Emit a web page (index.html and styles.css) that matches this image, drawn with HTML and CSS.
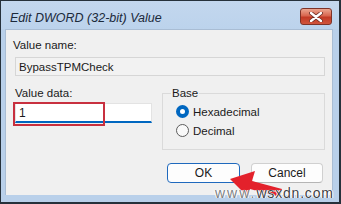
FILE: index.html
```html
<!DOCTYPE html>
<html lang="en">
<head>
    <meta charset="UTF-8">
    <title>Edit DWORD (32-bit) Value</title>
    <link rel="stylesheet" href="styles.css">
</head>
<body>
    <div class="window">
        <div class="titlebar">
            <span class="title">Edit DWORD (32-bit) Value</span>
            <div class="close">
                <svg width="14" height="10" viewBox="0 0 14 10">
                    <path d="M2 1 L12 9 M12 1 L2 9" stroke="#6b2b22" stroke-width="4" stroke-linecap="round"/>
                    <path d="M2 1 L12 9 M12 1 L2 9" stroke="#ffffff" stroke-width="2.4" stroke-linecap="round"/>
                </svg>
            </div>
        </div>

        <div class="client">
            <div class="lbl lbl-name">Value name:</div>
            <div class="field field-ro">BypassTPMCheck</div>

            <div class="data-row">
                <div class="data-col">
                    <div class="lbl">Value data:</div>
                    <div class="field field-edit">1</div>
                </div>
                <fieldset class="base">
                    <legend>Base</legend>
                    <div class="radio-row"><span class="radio checked"></span>Hexadecimal</div>
                    <div class="radio-row"><span class="radio"></span>Decimal</div>
                </fieldset>
            </div>

            <div class="buttons">
                <div class="btn btn-default">OK</div>
                <div class="btn">Cancel</div>
            </div>
        </div>

        <!-- annotations drawn over the dialog -->
        <div class="highlight"></div>
        <svg class="arrow" width="341" height="204" viewBox="0 0 341 204">
            <polygon points="230,179 255,171 252,181 282,189 280,197 250,189 248,197" fill="#e3212b"/>
        </svg>
        <div class="watermark"><span class="wm-light">www.</span>wsxdn.com</div>
    </div>
</body>
</html>
```

FILE: styles.css
```css
body {
    margin: 0;
    font-family: "Liberation Sans", Arial, sans-serif;
    font-size: 11.5px;
    color: #1a1a1a;
}
.window {
    position: relative;
    width: 341px;
    height: 204px;
    box-sizing: border-box;
    border-style: solid;
    border-color: #26313b;
    border-width: 1px 2px 2px 1px;
    background: #b9d0ea;
    padding: 0 6px 7px 4px;
    display: flex;
    flex-direction: column;
    overflow: hidden;
}
.titlebar {
    height: 28px;
    margin: 0 -6px 0 -4px;
    padding: 0 7px 0 9px;
    background: linear-gradient(#c3d7ee, #bcd3ec);
    display: flex;
    align-items: flex-start;
}
.title {
    font-style: italic;
    font-size: 12.5px;
    color: #1b2a3b;
    padding-top: 10px;
    line-height: 14px;
}
.close {
    margin-left: auto;
    margin-top: 7px;
    width: 32px;
    height: 17px;
    box-sizing: border-box;
    border: 1px solid #7e3328;
    border-radius: 3px;
    background: linear-gradient(#eba690 0%, #d8664f 45%, #c23a25 55%, #d0553d 100%);
    display: flex;
    align-items: center;
    justify-content: center;
}
.client {
    flex: 1;
    background: #f0f0f0;
    border: 1px solid #a9bdd4;
    border-bottom: none;
}
.lbl {
    line-height: 14px;
}
.lbl-name {
    margin: 8px 0 0 7px;
}
.field {
    box-sizing: border-box;
    padding-left: 3px;
    display: flex;
    align-items: center;
}
.field-ro {
    margin: 5px 0 0 9px;
    width: 310px;
    height: 19px;
    background: #f2f2f2;
    border: 1px solid #d6d6d6;
}
.data-row {
    display: flex;
    align-items: flex-start;
    margin-top: 10px;
}
.data-col {
    margin-left: 9px;
    width: 137px;
}
.field-edit {
    margin-top: 3px;
    height: 20px;
    background: #ffffff;
    border: 1px solid #e3e3e3;
    border-bottom: 2px solid #0067c0;
    font-size: 12px;
}
.base {
    margin: 0 0 0 10px;
    width: 163px;
    height: 64px;
    box-sizing: border-box;
    border: 1px solid #dadada;
    padding: 0 0 0 8px;
}
.base legend {
    padding: 0 1px;
    line-height: 14px;
}
.radio-row {
    display: flex;
    align-items: center;
    height: 19px;
}
.radio-row:first-of-type {
    margin-top: 2px;
}
.radio {
    width: 13px;
    height: 13px;
    box-sizing: border-box;
    border-radius: 50%;
    border: 1px solid #5c5c5c;
    background: #f9f9f9;
    margin: 0 4px 0 5px;
}
.radio.checked {
    border: 4px solid #0067c0;
    background: #ffffff;
}
.buttons {
    display: flex;
    justify-content: flex-end;
    gap: 11px;
    margin: 13px 9px 0 0;
}
.btn {
    width: 72px;
    height: 20px;
    box-sizing: border-box;
    border: 1px solid #d0d0d0;
    border-bottom-color: #b5b5b5;
    border-radius: 4px;
    background: #fdfdfd;
    display: flex;
    align-items: center;
    justify-content: center;
    font-size: 12px;
}
.btn-default {
    width: 73px;
    border: 1px solid #1f69bd;
}
.highlight {
    position: absolute;
    left: 12px;
    top: 101px;
    width: 92px;
    height: 24px;
    border: 2px solid #c8303f;
    box-sizing: border-box;
}
.arrow {
    position: absolute;
    left: -1px;
    top: -1px;
}
.watermark {
    position: absolute;
    left: 214px;
    top: 186px;
    font-size: 14px;
    line-height: 13px;
    letter-spacing: 0.8px;
    color: #3f4246;
    text-shadow: 0 0 1px #ffffff, 1px 0 0 #ffffff, -1px 0 0 #ffffff;
}
.wm-light {
    color: #7c7f83;
    letter-spacing: 2px;
}
```
